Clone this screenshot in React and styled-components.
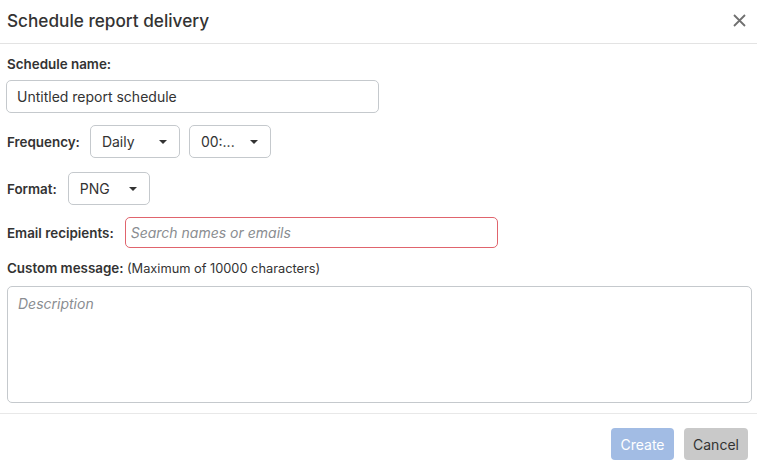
import React from "react";
import styled, { createGlobalStyle } from "styled-components";

const Global = createGlobalStyle`
  html, body { margin: 0; padding: 0; background: #fff; }
  body { font-family: Inter, "Noto Sans", Arial, sans-serif; color: #333; }
  * { box-sizing: border-box; }
`;

const Dialog = styled.div`
  width: 757px;
  height: 467px;
  display: flex;
  flex-direction: column;
  background: #fff;
`;

const Header = styled.div`
  height: 44px;
  display: flex;
  align-items: center;
  justify-content: space-between;
  padding: 0 10px 2px 7px;
  border-bottom: 1px solid #e3e3e3;
`;

const Title = styled.h1`
  margin: 0;
  font-size: 17.2px;
  font-weight: 500;
  color: #333;
`;

const CloseButton = styled.button`
  border: none;
  background: none;
  padding: 0;
  width: 16px;
  height: 16px;
  display: flex;
  align-items: center;
  justify-content: center;
  cursor: pointer;
`;

const Body = styled.div`
  flex: 1;
  display: flex;
  flex-direction: column;
  padding: 11px 5px 0 7px;
`;

const Label = styled.label`
  font-size: 13.4px;
  font-weight: 600;
  color: #333;
  line-height: 18px;
  white-space: nowrap;
`;

const Note = styled.span`
  font-weight: 400;
  font-size: 12.8px;
`;

const TextInput = styled.input`
  width: 373px;
  height: 33px;
  border: 1px solid #c5c9cd;
  border-radius: 5px;
  padding: 0 10px;
  font-family: inherit;
  font-size: 14px;
  color: #333;
  outline: none;
  &::placeholder { color: #8a8d91; font-style: italic; }
`;

const ErrorInput = styled(TextInput)`
  height: 31px;
  padding: 0 5px;
  border-color: #e0646d;
  &:focus { border-color: #e0646d; }
`;

const Row = styled.div`
  display: flex;
  align-items: center;
  gap: ${(p) => p.$gap || 10}px;
  margin-top: ${(p) => p.$mt || 0}px;
`;

const Group = styled.div`
  display: flex;
  gap: 9px;
`;

const Stack = styled.div`
  display: flex;
  flex-direction: column;
  gap: ${(p) => p.$gap || 0}px;
  margin-top: ${(p) => p.$mt || 0}px;
  margin-left: ${(p) => p.$ml || 0}px;
`;

const SelectBox = styled.div`
  width: ${(p) => p.$w}px;
  height: 33px;
  border: 1px solid #c5c9cd;
  border-radius: 5px;
  display: flex;
  align-items: center;
  justify-content: space-between;
  padding: 0 12px 0 11px;
  font-size: 14px;
  color: #333;
`;

const Caret = styled.span`
  width: 0;
  height: 0;
  border-left: 4px solid transparent;
  border-right: 4px solid transparent;
  border-top: 4px solid #333;
`;

const TextArea = styled.textarea`
  width: 745px;
  height: 117px;
  margin-top: 8px;
  border: 1px solid #c5c9cd;
  border-radius: 5px;
  padding: 8px 10px;
  font-family: inherit;
  font-size: 14px;
  resize: none;
  outline: none;
  &::placeholder { color: #8a8d91; font-style: italic; }
`;

const Footer = styled.div`
  height: 54px;
  border-top: 1px solid #e8e8e8;
  display: flex;
  justify-content: flex-end;
  align-items: flex-start;
  gap: 10px;
  padding: 14px 9px 0 0;
`;

const Button = styled.button`
  height: 32px;
  width: ${(p) => p.$w}px;
  border: none;
  border-radius: 4px;
  font-family: inherit;
  font-size: 14px;
  background: ${(p) => (p.$primary ? "#a2bce4" : "#c9c9c9")};
  color: ${(p) => (p.$primary ? "#fff" : "#333")};
  cursor: pointer;
`;

function Select({ w, value }) {
  return (
    <SelectBox $w={w}>
      <span>{value}</span>
      <Caret />
    </SelectBox>
  );
}

export default function App() {
  return (
    <>
      <Global />
      <Dialog>
        <Header>
          <Title>Schedule report delivery</Title>
          <CloseButton aria-label="Close">
            <svg width="13" height="13" viewBox="0 0 13 13">
              <path d="M1 1L12 12M12 1L1 12" stroke="#707070" strokeWidth="1.8" />
            </svg>
          </CloseButton>
        </Header>
        <Body>
          <Stack $gap={7}>
            <Label>Schedule name:</Label>
            <Stack $ml={-1}>
              <TextInput defaultValue="Untitled report schedule" />
            </Stack>
          </Stack>
          <Row $mt={12} $gap={10}>
            <Label>Frequency:</Label>
            <Group>
              <Select w={90} value="Daily" />
              <Select w={82} value="00:..." />
            </Group>
          </Row>
          <Row $mt={14} $gap={11}>
            <Label>Format:</Label>
            <Select w={82} value="PNG" />
          </Row>
          <Row $mt={12} $gap={11}>
            <Label>Email recipients:</Label>
            <ErrorInput placeholder="Search names or emails" />
          </Row>
          <Stack $mt={11}>
            <Label>
              Custom message: <Note>(Maximum of 10000 characters)</Note>
            </Label>
            <TextArea placeholder="Description" />
          </Stack>
        </Body>
        <Footer>
          <Button $primary $w={63}>Create</Button>
          <Button $w={64}>Cancel</Button>
        </Footer>
      </Dialog>
    </>
  );
}
